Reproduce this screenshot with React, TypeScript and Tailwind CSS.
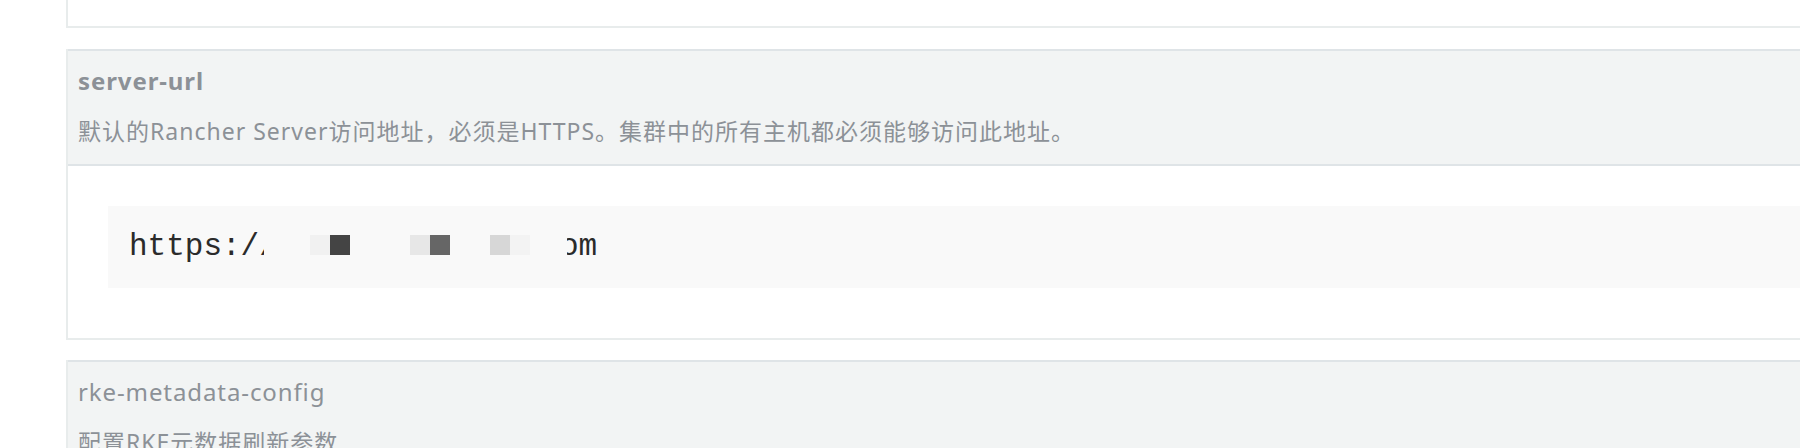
const sans = "font-['Noto_Sans','Noto_Sans_CJK_SC',sans-serif]";

function Header({ title, desc, bold }: { title: string; desc: string; bold?: boolean }) {
  return (
    <div className={`${sans} bg-[#f2f4f4] border-t-2 border-b-2 border-[#dfe4e7] pl-[10px] pt-[14px] pb-[17px] text-[#8c9197]`}>
      <div className={`text-[24px] leading-[32px] tracking-[0.9px] ${bold ? "font-bold" : "font-normal"}`}>{title}</div>
      <div className="text-[23px] leading-[32px] tracking-[1px] mt-[18px]">{desc}</div>
    </div>
  );
}

function Redacted() {
  // pixelated part of the url
  return (
    <div className="flex items-center font-['Liberation_Mono',monospace] text-[31px] text-[#2b2b2b]">
      <span>https:/</span>
      <span className="w-[5px] overflow-hidden">/</span>
      <div className="flex ml-[46px] -mt-[4px]">
        <span className="w-[20px] h-[20px] bg-[#f1f1f1]" />
        <span className="w-[20px] h-[20px] bg-[#444444]" />
        <span className="w-[60px]" />
        <span className="w-[20px] h-[20px] bg-[#e7e7e7]" />
        <span className="w-[20px] h-[20px] bg-[#666666]" />
        <span className="w-[40px]" />
        <span className="w-[20px] h-[20px] bg-[#d7d7d7]" />
        <span className="w-[20px] h-[20px] bg-[#f3f3f3]" />
      </div>
      <span className="ml-[37px] w-[30px] overflow-hidden flex justify-end">
        <span className="shrink-0">om</span>
      </span>
    </div>
  );
}

export default function App() {
  return (
    <div className="bg-white h-[448px] w-full overflow-hidden pl-[66px]">
      <div className="w-[1800px] flex flex-col">
        <div className="h-[28px] border-l-2 border-b-2 border-[#e8ecec]" />

        <div className="mt-[21px] border-l-2 border-b-2 border-[#e8ecec]">
          <Header
            bold
            title="server-url"
            desc="默认的Rancher Server访问地址，必须是HTTPS。集群中的所有主机都必须能够访问此地址。"
          />
          <div className="pt-[40px] pb-[50px] pl-[40px] bg-white">
            <div className="bg-[#f9f9f9] h-[82px] pl-[21px] flex items-center">
              <Redacted />
            </div>
          </div>
        </div>

        <div className="mt-[20px] border-l-2 border-[#e8ecec]">
          <Header title="rke-metadata-config" desc="配置RKE元数据刷新参数" />
        </div>
      </div>
    </div>
  );
}
